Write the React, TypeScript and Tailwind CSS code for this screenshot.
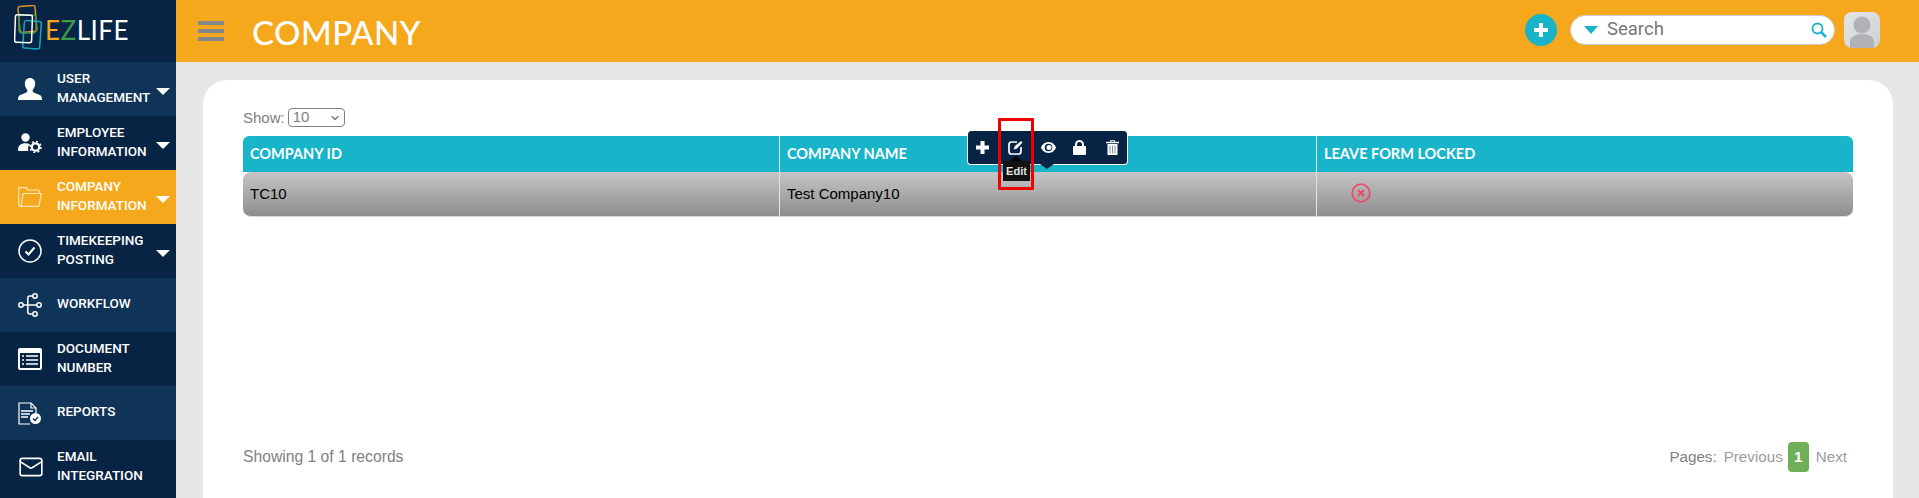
import { ReactNode } from 'react'
import { ChevronDown, Mail } from 'lucide-react'

type NavItem = { lines: string[]; icon: ReactNode; caret?: boolean; bg: string }

const UserIcon = () => (
  <svg width="24" height="22" viewBox="0 0 24 22" fill="white">
    <path d="M12 0c3.2 0 5.2 2.4 5.2 5.6 0 2.6-1 4.8-2.5 6.1v1.4c0 1 .7 1.500 2 2l5 2c1.400.6 2.300 1.600 2.300 4.900H0c0-3.300.9-4.300 2.300-4.900l5-2c1.300-.5 2-1 2-2v-1.400C7.800 10.400 6.800 8.200 6.800 5.600 6.800 2.400 8.800 0 12 0z" />
  </svg>
)

const UserGearIcon = () => (
  <svg width="24" height="20" viewBox="0 0 24 20" fill="white">
    <circle cx="7.500" cy="4.500" r="4.200" />
    <path d="M0 17c0-4.500 3-6.800 7.500-6.800 1.700 0 3.200.3 4.400 1-1.300 1.200-2 2.900-1.800 5.300.1.700.2 1 .4 1.500H1.500C.5 18 0 17.700 0 17z" />
    <circle cx="17.500" cy="14" r="3.700" fill="none" stroke="white" strokeWidth="2.200" />
    <circle cx="17.500" cy="14" r="5.500" fill="none" stroke="white" strokeWidth="1.500" strokeDasharray="2 2.300" />
  </svg>
)

const FolderOpenIcon = () => (
  <svg width="24" height="20" viewBox="0 0 24 20" fill="none" stroke="#FBE6BC" strokeWidth="1.200">
    <path d="M3 19.300h17c.6 0 1-.3 1.100-1L23.300 6.500H5.200L3 19.300c-1.400 0-2.300-.6-2.300-2V1.600c0-.5.300-.9.900-.9h6.300l2 2.300h10.500c.6 0 1 .4 1 1v2.500" />
  </svg>
)

const CheckCircleIcon = () => (
  <svg width="24" height="24" viewBox="0 0 24 24" fill="none" stroke="white" strokeWidth="1.500">
    <circle cx="12" cy="12" r="11" />
    <path d="M7.500 12.500l3 3 6-7" strokeWidth="2" />
  </svg>
)

const WorkflowIcon = () => (
  <svg width="24" height="24" viewBox="0 0 24 24" fill="none" stroke="white" strokeWidth="1.500">
    <circle cx="3" cy="12" r="2.200" />
    <circle cx="17" cy="3" r="2.200" />
    <circle cx="21" cy="12" r="2.200" />
    <circle cx="17" cy="21" r="2.200" />
    <path d="M5.200 12h13.600M14.800 3H12c-1.500 0-2.200.8-2.200 2v14c0 1.200.7 2 2.200 2h2.800" />
  </svg>
)

const ListIcon = () => (
  <svg width="24" height="22" viewBox="0 0 24 22">
    <rect width="24" height="22" rx="2" fill="white" />
    <rect x="2" y="5" width="20" height="15" fill="#082444" />
    <path d="M4 8h2M8 8h12M4 12h2M8 12h12M4 16h2M8 16h12" stroke="white" strokeWidth="1.600" />
  </svg>
)

const ReportIcon = () => (
  <svg width="24" height="23" viewBox="0 0 24 23" fill="none" stroke="white" strokeWidth="1.200">
    <path d="M12 22H1V1h12l5 5v6" />
    <path d="M13 1v5h5" />
    <path d="M3 9h12M3 12h9M3 15h7" strokeWidth="1.500" />
    <circle cx="17.500" cy="16.500" r="5.500" fill="white" stroke="none" />
    <path d="M15 16.500l2 2 3-3.500" stroke="#0F3457" strokeWidth="1.500" />
  </svg>
)

const items: NavItem[] = [
  { lines: ['User', 'Management'], icon: <UserIcon />, caret: true, bg: 'bg-[#0F3457]' },
  { lines: ['Employee', 'Information'], icon: <UserGearIcon />, caret: true, bg: 'bg-[#082444]' },
  { lines: ['Company', 'Information'], icon: <FolderOpenIcon />, caret: true, bg: 'bg-[#F6A81C]' },
  { lines: ['Timekeeping', 'Posting'], icon: <CheckCircleIcon />, caret: true, bg: 'bg-[#082444]' },
  { lines: ['Workflow'], icon: <WorkflowIcon />, bg: 'bg-[#0F3457]' },
  { lines: ['Document', 'Number'], icon: <ListIcon />, bg: 'bg-[#082444]' },
  { lines: ['Reports'], icon: <ReportIcon />, bg: 'bg-[#0F3457]' },
  { lines: ['Email', 'Integration'], icon: <Mail size={26} strokeWidth={1.5} color="white" />, bg: 'bg-[#082444]' },
]

function Logo() {
  return (
    <div className="h-[62px] flex items-center pl-[14px]">
      <svg width="32" height="46" viewBox="0 0 32 46" fill="none" strokeWidth="1.500" className="mt-[-6px]">
        <rect x="5" y="1" width="17" height="26" rx="2" stroke="#D6952A" transform="rotate(-5 13 14)" />
        <rect x="5" y="10" width="17" height="18" rx="3" stroke="#3E8E41" />
        <rect x="9.500" y="16" width="17" height="27.500" rx="2" stroke="#18A5BE" transform="rotate(4 18 30)" />
        <rect x="1" y="10" width="17" height="27.500" rx="2" stroke="white" transform="rotate(2 9 24)" />
      </svg>
      <span className="ml-[-1px] mb-[2px] text-[26px] leading-none font-['Lato',sans-serif] tracking-[0.5px]">
        <span className="text-[#F6A81C]">E</span>
        <span className="text-[#3E9A48]">Z</span>
        <span className="text-white">LIFE</span>
      </span>
    </div>
  )
}

function Sidebar() {
  return (
    <aside className="w-[176px] shrink-0 bg-[#082444] font-['Roboto',sans-serif]">
      <Logo />
      {items.map((item) => (
        <div key={item.lines[0]} className={`h-[54px] flex items-center relative ${item.bg}`}>
          <div className="w-[57px] pl-[18px] shrink-0 flex">{item.icon}</div>
          <div className="mt-[-3px] text-[13.500px] leading-[19px] font-medium uppercase text-white">
            {item.lines.map((line) => (
              <div key={line}>{line}</div>
            ))}
          </div>
          {item.caret && (
            <div className="absolute left-[156px] top-[26px] w-0 h-0 border-l-[7.500px] border-r-[7.500px] border-t-[7px] border-l-transparent border-r-transparent border-t-white" />
          )}
        </div>
      ))}
    </aside>
  )
}

function Header() {
  return (
    <header className="h-[62px] bg-[#F6A81C] flex items-center">
      <div className="ml-[22px] w-[26px] flex flex-col gap-[4px]">
        <div className="h-[4px] bg-[#86878A]" />
        <div className="h-[4px] bg-[#86878A]" />
        <div className="h-[4px] bg-[#86878A]" />
      </div>
      <h1 className="ml-[28px] mt-[2px] text-[33px] leading-none text-white font-['Lato',sans-serif] font-medium tracking-[0.5px]">COMPANY</h1>
      <div className="ml-auto mt-[-3px] flex items-center">
        <div className="w-8 h-8 rounded-full bg-[#18B4CA] flex items-center justify-center">
          <svg width="14" height="14" viewBox="0 0 14 14" fill="white">
            <path d="M5 0h4v5h5v4H9v5H5V9H0V5h5z" />
          </svg>
        </div>
        <div className="ml-[13px] w-[265px] h-[30px] rounded-full bg-white border border-[#C9CDD2] flex items-center pl-[13px] pr-[7px]">
          <div className="w-0 h-0 border-l-[7.500px] border-r-[7.500px] border-t-[8px] border-l-transparent border-r-transparent border-t-[#18B4CA]" />
          <span className="ml-[9px] text-[18.500px] text-[#74777B] font-['Roboto',sans-serif]">Search</span>
          <svg width="16" height="16" viewBox="0 0 16 16" fill="none" stroke="#18B4CA" className="ml-auto">
            <circle cx="6.500" cy="6.500" r="5" strokeWidth="1.800" />
            <path d="M10.500 10.500l4.500 4.500" strokeWidth="2.500" />
          </svg>
        </div>
        <div className="ml-[9px] mr-[39px] w-9 h-9 rounded-lg overflow-hidden bg-gradient-to-br from-[#E4E5E7] to-[#CFD0D3]">
          <svg width="36" height="36" viewBox="0 0 36 36" fill="#B1B2B6">
            <circle cx="18" cy="13" r="8.500" />
            <path d="M6 36v-6c0-5 5-8 12-8s12 3 12 8v6z" />
          </svg>
        </div>
      </div>
    </header>
  )
}

function ActionToolbar() {
  return (
    <div className="absolute left-[724px] top-[-5px] w-[161px] h-[34px] rounded-[4px] bg-[#082444] border-b border-x border-white flex items-center pl-[8px] text-white">
      <svg width="13" height="13" viewBox="0 0 13 13" fill="white">
        <path d="M4.500 0h4v4.500H13v4H8.500V13h-4V8.500H0v-4h4.500z" />
      </svg>
      <svg width="15" height="15" viewBox="0 0 15 15" fill="none" stroke="white" strokeWidth="1.700" className="ml-[19px]">
        <path d="M9 2H3.500C2 2 1 3 1 4.500v7C1 13 2 14 3.500 14h7c1.500 0 2.500-1 2.500-2.500V7" />
        <path d="M5.500 9.500L7 6l6-5 1.500 1.500-5.500 6z" fill="white" stroke="none" />
      </svg>
      <svg width="15" height="13" viewBox="0 0 15 13" fill="white" className="ml-[18px]">
        <path d="M7.500 1C3.500 1 1 4 0 6.500 1 9 3.500 12 7.500 12s6.500-3 7.500-5.500C14 4 11.500 1 7.500 1z" />
        <circle cx="7.500" cy="6.500" r="3.800" fill="#082444" />
        <circle cx="8" cy="6.500" r="2.500" />
      </svg>
      <svg width="13" height="15" viewBox="0 0 13 15" fill="white" className="ml-[17px]">
        <path d="M2 6V4.500a4.500 4.500 0 019 0V6h-2V4.500a2.500 2.500 0 00-5 0V6z" />
        <rect y="6" width="13" height="9" rx="1" />
      </svg>
      <svg width="13" height="15" viewBox="0 0 13 15" fill="none" stroke="white" className="ml-[20px]">
        <path d="M0 2.500h13" strokeWidth="1.500" />
        <path d="M4.500 2V.7h4V2" />
        <path d="M1.500 4h10v11h-10z" fill="white" stroke="none" />
        <path d="M4 5.500V13.500M6.500 5.500V13.500M9 5.500V13.500" stroke="#7C8DA5" />
      </svg>
      <div className="absolute left-[42px] top-[25px] w-0 h-0 border-l-[6px] border-r-[6px] border-b-[5px] border-l-transparent border-r-transparent border-b-black" />
      <div className="absolute left-[35px] top-[30px] w-[27px] h-[20px] bg-[#111] text-[11px] leading-[20px] text-center font-bold text-[#E5E5E5] font-['Liberation_Sans',sans-serif]">Edit</div>
      <div className="absolute left-[72px] top-[33px] w-0 h-0 border-l-[7px] border-r-[7px] border-t-[5px] border-l-transparent border-r-transparent border-t-[#082444]" />
      <div className="absolute left-[30px] top-[-13px] w-[36px] h-[72px] border-[3px] border-[#F00000] rounded-[1px]" />
    </div>
  )
}

function CompanyTable() {
  const headClass = "h-[36px] flex items-center pb-[1px] px-[7px] text-[14.500px] font-bold text-white font-['Lato',sans-serif]"
  const cellClass = "h-[44px] flex items-center px-[7px] text-[15px] text-black"
  return (
    <div className="relative">
      <div className="grid grid-cols-[536px_537px_1fr] bg-[#18B4CA] rounded-t-[6px]">
        <div className={headClass}>COMPANY ID</div>
        <div className={`${headClass} border-l border-[#D8F0F4]`}>COMPANY NAME</div>
        <div className={`${headClass} border-l border-[#D8F0F4]`}>LEAVE FORM LOCKED</div>
      </div>
      <div className="grid grid-cols-[536px_537px_1fr] rounded-[8px] bg-gradient-to-b from-[#C6C6C6] to-[#8E8E8E] border-b border-[#D9D9D9]">
        <div className={cellClass}>TC10</div>
        <div className={`${cellClass} border-l border-[#E3E3E3]`}>Test Company10</div>
        <div className={`${cellClass} border-l border-[#E3E3E3] pl-[34px]`}>
          <svg width="20" height="20" viewBox="0 0 20 20" fill="none" stroke="#EE4B6A" className="mt-[-3px]">
            <circle cx="10" cy="10" r="8.800" strokeWidth="1.800" />
            <path d="M7 7l6 6M13 7l-6 6" strokeWidth="2.200" />
          </svg>
        </div>
      </div>
      <ActionToolbar />
    </div>
  )
}

export default function App() {
  return (
    <div className="h-screen w-full flex overflow-hidden font-['Liberation_Sans',sans-serif]">
      <Sidebar />
      <div className="flex-1 flex flex-col min-w-0 bg-[#E6E6E6]">
        <Header />
        <main className="flex-1 pt-[18px] pl-[27px] pr-[26px] min-h-0 flex">
          <div className="flex-1 bg-white rounded-t-[24px] pl-[40px] pr-[40px] pt-[28px] flex flex-col">
            <div className="h-[28px] flex items-start text-[15px] text-[#808080]">
              <span className="leading-[20px]">Show:</span>
              <div className="ml-[3px] w-[57px] h-[19px] border border-[#808080] rounded-[4px] flex items-center justify-between pl-[4px] pr-[3px] text-[#808080] text-[15px]">
                10
                <ChevronDown size={12} strokeWidth={3} />
              </div>
            </div>
            <CompanyTable />
            <div className="mt-[225px] flex items-center text-[15.700px] text-[#808080]">
              <span>Showing 1 of 1 records</span>
              <div className="ml-auto flex items-center pr-[6px] text-[15.200px]">
                <span>Pages:</span>
                <span className="ml-[7px] text-[#9A9AA0]">Previous</span>
                <span className="ml-[5px] w-[21px] h-[30px] rounded-[4px] bg-[#6FAF5A] text-white font-bold flex items-center justify-center">1</span>
                <span className="ml-[7px] text-[#9A9AA0]">Next</span>
              </div>
            </div>
          </div>
        </main>
      </div>
    </div>
  )
}
